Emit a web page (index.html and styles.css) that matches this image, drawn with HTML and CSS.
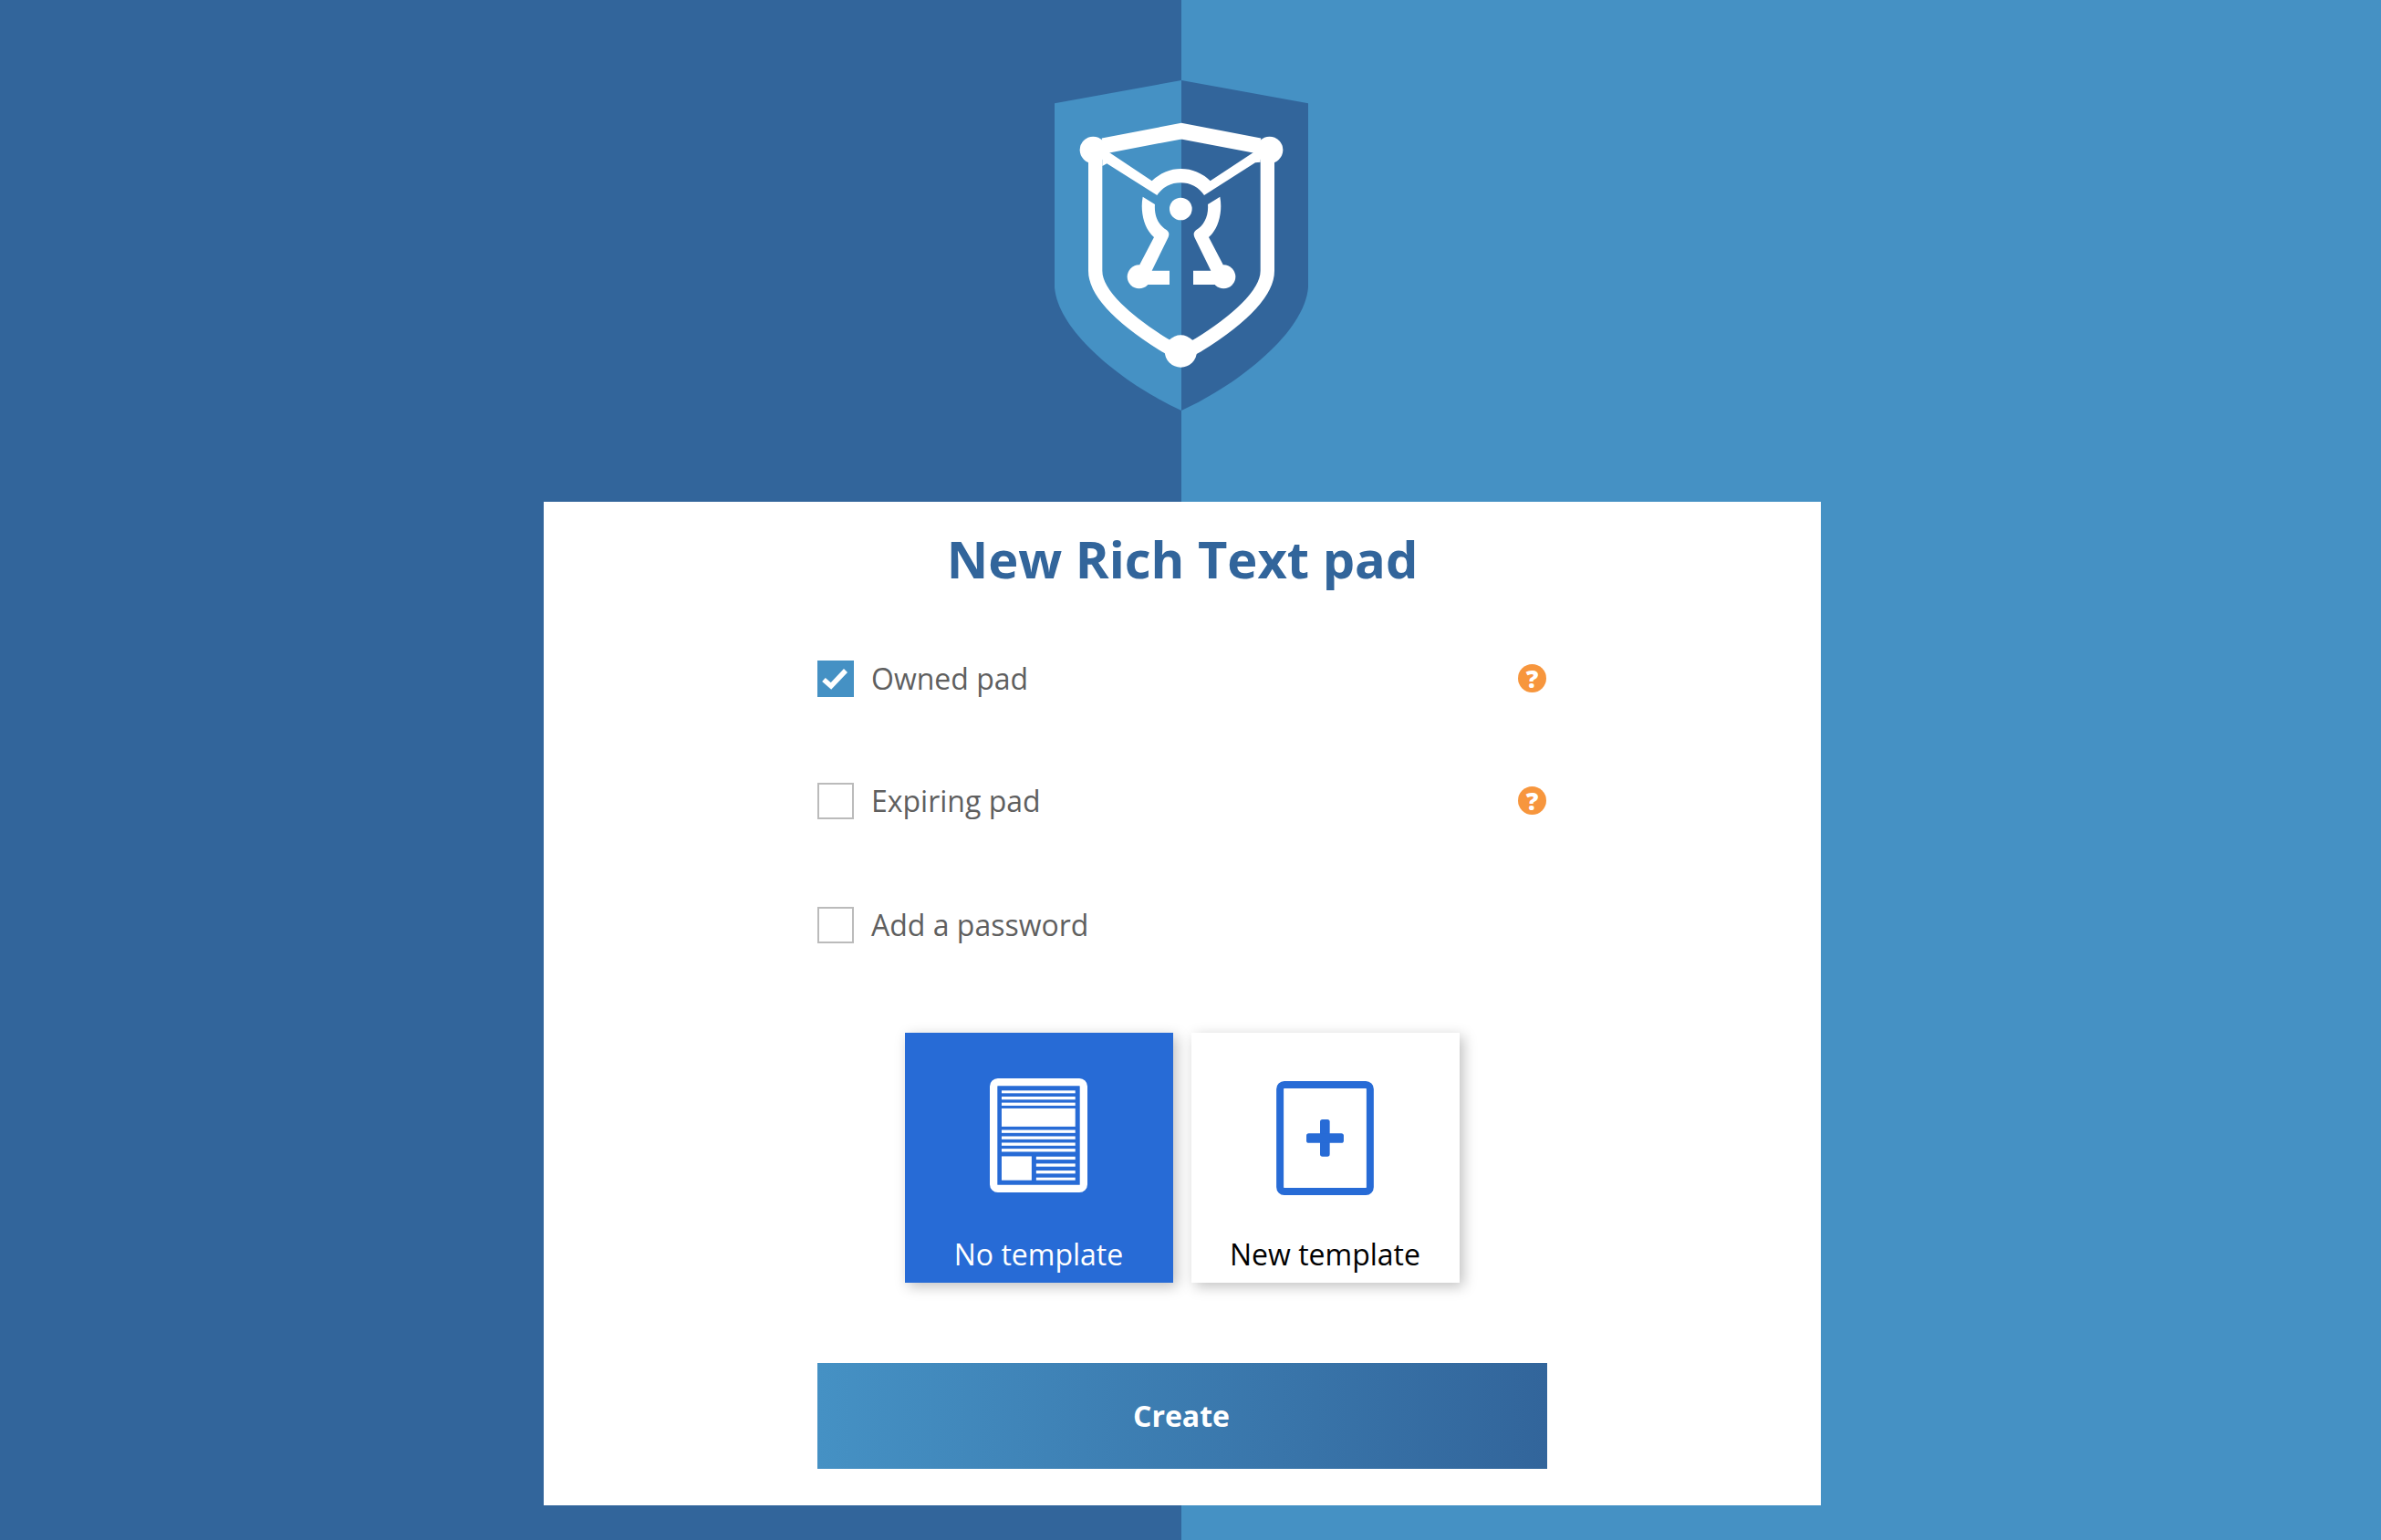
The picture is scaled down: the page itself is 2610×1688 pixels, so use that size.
FILE: index.html
```html
<!DOCTYPE html>
<html lang="en">
<head>
    <meta charset="UTF-8">
    <title>New Rich Text pad</title>
    <link rel="stylesheet" href="styles.css">
</head>
<body>
    <div class="page">
        <svg class="logo" viewBox="0 0 990 1170">
            <path class="shield-left" d="M495 54 L78 130 V735 C90 880 300 1050 495 1140 Z"/>
            <path class="shield-right" d="M495 54 L912 130 V735 C900 880 690 1050 495 1140 Z"/>
            <path class="logo-top" d="M238 270 L495 221 L752 270"/>
            <path class="logo-line" d="M212 285 V680 C212 760 320 850 440 925 L495 955 L550 925 C670 850 778 760 778 680 V285"/>
            <circle class="logo-fill" cx="205" cy="283" r="44"/>
            <circle class="logo-fill" cx="785" cy="283" r="44"/>
            <circle class="logo-fill" cx="493" cy="945" r="53"/>
            <circle class="logo-fill" cx="493" cy="477" r="37"/>
            <path class="logo-fill" d="M235 276 L398 385 A136 136 0 0 1 590 385 L755 276 L755 323 L738 325 L570 432 A93 93 0 0 0 415 432 L250 328 L235 336 Z"/>
            <g id="leg">
                <path class="logo-fill" d="M368 437 L408 462 C405 500 420 530 447 547 Q458 555 452 570 L398 680 H456 V726 H370 L358 660 L405 570 C375 545 358 490 368 437 Z"/>
                <circle class="logo-fill" cx="356" cy="700" r="39"/>
            </g>
            <use href="#leg" transform="translate(990 0) scale(-1 1)"/>
        </svg>

        <div class="panel">
            <h1>New Rich Text pad</h1>

            <div class="options">
                <div class="option">
                    <span class="box checked">
                        <svg viewBox="0 0 40 40"><path d="M7 21 L15 28 L31 11"/></svg>
                    </span>
                    <span class="option-label">Owned pad</span>
                    <span class="help">?</span>
                </div>
                <div class="option">
                    <span class="box"></span>
                    <span class="option-label">Expiring pad</span>
                    <span class="help">?</span>
                </div>
                <div class="option last">
                    <span class="box"></span>
                    <span class="option-label">Add a password</span>
                </div>
            </div>

            <div class="templates">
                <div class="card selected">
                    <svg class="card-icon" viewBox="313 186 322 376">
                        <rect class="doc-frame" x="325.500" y="198.500" width="297" height="351" rx="14"/>
                        <rect x="352" y="226" width="243" height="9"/>
                        <rect x="352" y="246" width="243" height="10"/>
                        <rect x="352" y="266" width="243" height="10"/>
                        <rect x="352" y="285" width="243" height="60"/>
                        <rect x="352" y="356" width="243" height="10"/>
                        <rect x="352" y="377" width="243" height="10"/>
                        <rect x="352" y="398" width="243" height="10"/>
                        <rect x="352" y="418" width="243" height="10"/>
                        <rect x="352" y="443" width="99" height="79"/>
                        <rect x="466" y="444" width="129" height="10"/>
                        <rect x="466" y="467" width="129" height="10"/>
                        <rect x="466" y="490" width="129" height="10"/>
                        <rect x="466" y="513" width="129" height="9"/>
                    </svg>
                    <div class="card-label">No template</div>
                </div>
                <div class="card">
                    <svg class="card-icon plus" viewBox="326 194 321 376">
                        <rect class="doc-frame" x="338" y="206" width="297" height="352" rx="14"/>
                        <rect x="470" y="320" width="32" height="123" rx="8"/>
                        <rect x="425" y="366" width="123" height="32" rx="8"/>
                    </svg>
                    <div class="card-label">New template</div>
                </div>
            </div>

            <button class="create">Create</button>
        </div>
    </div>
</body>
</html>
```
FILE: styles.css
```css
html, body {
    margin: 0;
    padding: 0;
}
body {
    font-family: 'Open Sans', 'Noto Sans', sans-serif;
    height: 1688px;
    overflow: hidden;
    background: linear-gradient(to right, #32659b 1295px, #4591c4 1295px);
}
.page {
    width: 2592px;
    display: flex;
    flex-direction: column;
    align-items: center;
}
.logo {
    width: 330px;
    height: 390px;
    margin-top: 70px;
    margin-left: -2px;
    margin-bottom: 90px;
    display: block;
}
.shield-left { fill: #4591c4; }
.shield-right { fill: #32659b; }
.logo-line {
    fill: none;
    stroke: #fff;
    stroke-width: 46;
}
.logo-top {
    fill: none;
    stroke: #fff;
    stroke-width: 52;
}
.logo-fill { fill: #fff; }

.panel {
    width: 1400px;
    height: 1100px;
    box-sizing: border-box;
    background: #fff;
    display: flex;
    flex-direction: column;
    align-items: center;
    padding-top: 22px;
}
h1 {
    margin: 0;
    font-size: 56px;
    line-height: 80px;
    font-weight: 700;
    color: #32659b;
}
.options {
    width: 800px;
    margin-top: 72px;
    display: flex;
    flex-direction: column;
    gap: 94px;
}
.option {
    display: flex;
    align-items: center;
    height: 40px;
}
.option.last {
    margin-top: 2px;
}
.box {
    width: 40px;
    height: 40px;
    box-sizing: border-box;
    border: 2px solid #bbb;
    margin-right: 19px;
}
.box.checked {
    border: none;
    background: #4591c4;
}
.box svg {
    display: block;
    width: 40px;
    height: 40px;
}
.box path {
    fill: none;
    stroke: #fff;
    stroke-width: 5.500;
}
.option-label {
    flex: 1;
    font-size: 32px;
    color: #5f5f5f;
    margin-bottom: 2px;
}
.help {
    width: 31px;
    height: 31px;
    margin-right: 1px;
    margin-bottom: 2px;
    border-radius: 50%;
    background: #f7963d;
    color: #fff;
    font-size: 27px;
    font-weight: 800;
    line-height: 31px;
    text-align: center;
}
.templates {
    display: flex;
    gap: 20px;
    margin-top: 98px;
}
.card {
    width: 294px;
    height: 274px;
    background: #fff;
    box-shadow: 4px 4px 14px rgba(0, 0, 0, 0.25);
    color: #000;
    display: flex;
    flex-direction: column;
    align-items: center;
}
.card.selected {
    background: #276bd6;
    color: #fff;
}
.card-icon {
    width: 107px;
    height: 125px;
    margin-top: 50px;
    margin-right: 2px;
    fill: #fff;
}
.card-icon.plus {
    margin-top: 53px;
    fill: #276bd6;
}
.doc-frame {
    fill: none;
    stroke: #fff;
    stroke-width: 25;
}
.plus .doc-frame {
    stroke: #276bd6;
    stroke-width: 24;
}
.card-label {
    font-size: 32px;
    line-height: 44px;
    position: absolute;
    margin-top: 221px;
    margin-left: -1px;
}
.create {
    width: 800px;
    height: 116px;
    margin-top: 88px;
    padding: 0 2px 2px 0;
    border: none;
    background: linear-gradient(to right, #4591c4, #32659b);
    color: #fff;
    font-family: inherit;
    font-size: 32px;
    font-weight: 700;
}
```
